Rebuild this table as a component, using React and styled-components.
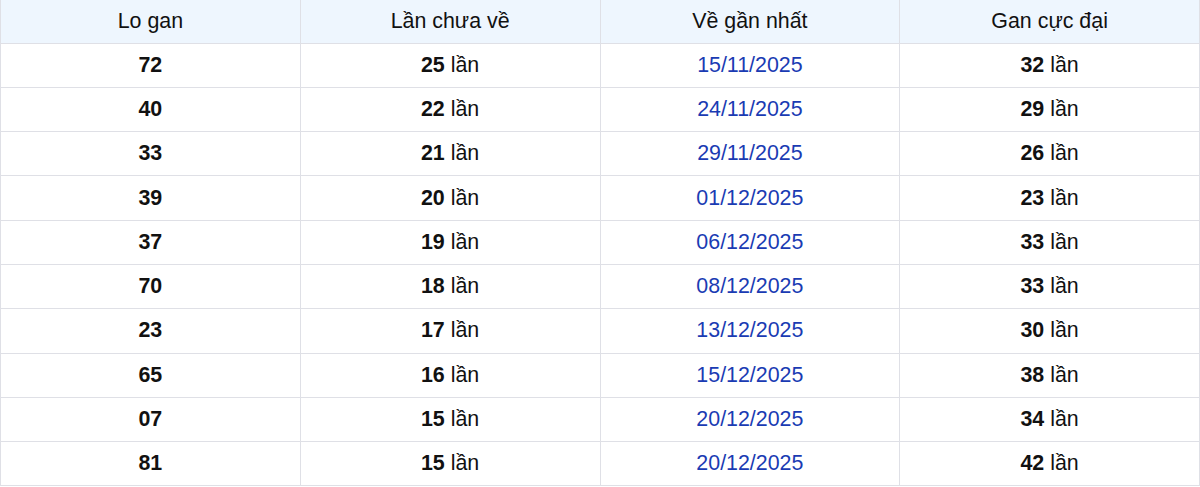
import React from 'react';
import styled, { createGlobalStyle } from 'styled-components';

const GlobalStyle = createGlobalStyle`
  html, body {
    margin: 0;
    padding: 0;
    background: #ffffff;
  }
  body {
    font-family: "Liberation Sans", Arial, sans-serif;
  }
`;

const Table = styled.table`
  width: 1200px;
  border-collapse: collapse;
  table-layout: fixed;
  font-size: 21.4px;
  color: #111111;
`;

const HeadCell = styled.th`
  height: 43px;
  padding: 0;
  font-weight: normal;
  text-align: center;
  background: #eef6fe;
  border: 1px solid #dfe0e6;
  border-top: none;
  box-sizing: border-box;
`;

const Cell = styled.td`
  height: 44.3px;
  padding: 0;
  text-align: center;
  border: 1px solid #dfe0e6;
  box-sizing: border-box;
  color: ${props => props.date ? '#1a3bb3' : '#111111'};
`;

const Num = styled.b`
  font-weight: bold;
`;

const rows = [
  ['72', 25, '15/11/2025', 32],
  ['40', 22, '24/11/2025', 29],
  ['33', 21, '29/11/2025', 26],
  ['39', 20, '01/12/2025', 23],
  ['37', 19, '06/12/2025', 33],
  ['70', 18, '08/12/2025', 33],
  ['23', 17, '13/12/2025', 30],
  ['65', 16, '15/12/2025', 38],
  ['07', 15, '20/12/2025', 34],
  ['81', 15, '20/12/2025', 42],
];

export default function App() {
  return (
    <React.Fragment>
      <GlobalStyle />
      <Table>
        <thead>
          <tr>
            <HeadCell>Lo gan</HeadCell>
            <HeadCell>Lần chưa về</HeadCell>
            <HeadCell>Về gần nhất</HeadCell>
            <HeadCell>Gan cực đại</HeadCell>
          </tr>
        </thead>
        <tbody>
          {rows.map((r) => (
            <tr key={r[0]}>
              <Cell><Num>{r[0]}</Num></Cell>
              <Cell><Num>{r[1]}</Num> lần</Cell>
              <Cell date>{r[2]}</Cell>
              <Cell><Num>{r[3]}</Num> lần</Cell>
            </tr>
          ))}
        </tbody>
      </Table>
    </React.Fragment>
  );
}
